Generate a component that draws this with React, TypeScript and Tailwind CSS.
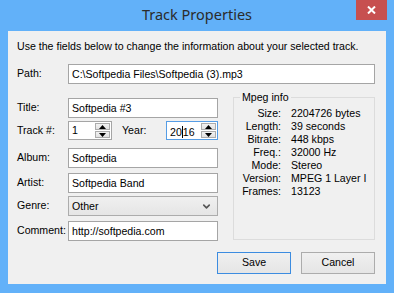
import { ChevronDown } from 'lucide-react';

const body = "font-['Liberation_Sans',Arial,sans-serif] text-[10.6px] text-black";

function Field({ value, className = '' }: { value: string; className?: string }) {
  return (
    <div className={`flex h-[20px] items-center border border-[#a5a5a5] bg-white px-[3px] ${className}`}>
      <span className="leading-none">{value}</span>
    </div>
  );
}

function SpinButtons() {
  return (
    <div className="flex h-full w-[15px] flex-col gap-[1px] py-[1px]">
      <div className="flex flex-1 items-center justify-center border border-[#acacac] bg-gradient-to-b from-[#f2f2f2] to-[#e2e2e2]">
        <svg width="7" height="4" viewBox="0 0 7 4"><path d="M0 4 L3.5 0 L7 4 Z" fill="#000" /></svg>
      </div>
      <div className="flex flex-1 items-center justify-center border border-[#acacac] bg-gradient-to-b from-[#f2f2f2] to-[#e2e2e2]">
        <svg width="7" height="4" viewBox="0 0 7 4"><path d="M0 0 L3.5 4 L7 0 Z" fill="#000" /></svg>
      </div>
    </div>
  );
}

function SpinBox({ value, focused, className = '' }: { value: string; focused?: boolean; className?: string }) {
  return (
    <div
      className={`flex h-[19px] items-center border bg-white pl-[3px] pr-[1px] ${
        focused ? 'border-[#569de5]' : 'border-[#a5a5a5]'
      } ${className}`}
    >
      <span className="flex-1 leading-none">
        {focused ? (
          <>
            20<span className="inline-block h-[12px] w-[1px] translate-y-[2px] bg-black" />16
          </>
        ) : (
          value
        )}
      </span>
      <SpinButtons />
    </div>
  );
}

const mpegInfo: [string, string][] = [
  ['Size:', '2204726 bytes'],
  ['Length:', '39 seconds'],
  ['Bitrate:', '448 kbps'],
  ['Freq.:', '32000 Hz'],
  ['Mode:', 'Stereo'],
  ['Version:', 'MPEG 1 Layer I'],
  ['Frames:', '13123'],
];

export default function App() {
  return (
    <div className="flex h-[293px] w-[394px] flex-col bg-[#62b1f9]">
      {/* title bar */}
      <div className="relative flex h-[31px] items-center justify-center">
        <span className="pb-[1px] font-['Noto_Sans',sans-serif] text-[14.5px] text-[#2b2b2b]">Track Properties</span>
        <button className="absolute right-[7px] top-0 flex h-[20px] w-[31px] items-center justify-center bg-[#c75050]">
          <svg width="9" height="8" viewBox="0 0 9 8">
            <path d="M1 0.5 L8 7.5 M8 0.5 L1 7.5" stroke="#fff" strokeWidth="2" />
          </svg>
        </button>
      </div>

      {/* client area */}
      <div className={`mx-[8px] mb-[9px] flex flex-1 flex-col bg-[#f0f0f0] pl-[9px] pr-[11px] pt-[8px] ${body}`}>
        <p className="h-[14px] leading-[14px]">Use the fields below to change the information about your selected track.</p>

        <div className="mt-[11px] flex items-center">
          <span className="w-[51px]">Path:</span>
          <Field value="C:\Softpedia Files\Softpedia (3).mp3" className="flex-1" />
        </div>

        <div className="mt-[13px] flex gap-[15px]">
          {/* left column */}
          <div className="flex w-[201px] flex-col">
            <div className="mt-[1px] flex items-center">
              <span className="w-[51px]">Title:</span>
              <Field value="Softpedia #3" className="flex-1" />
            </div>
            <div className="mt-[3px] flex items-center">
              <span className="w-[51px]">Track #:</span>
              <SpinBox value="1" className="w-[44px]" />
              <span className="ml-[10px] w-[44px]">Year:</span>
              <SpinBox value="2016" focused className="w-[52px]" />
            </div>
            <div className="mt-[8px] flex items-center">
              <span className="w-[51px]">Album:</span>
              <Field value="Softpedia" className="flex-1" />
            </div>
            <div className="mt-[5px] flex items-center">
              <span className="w-[51px]">Artist:</span>
              <Field value="Softpedia Band" className="flex-1" />
            </div>
            <div className="mt-[3px] flex items-center">
              <span className="w-[51px]">Genre:</span>
              <div className="flex h-[20px] flex-1 items-center justify-between border border-[#acacac] bg-gradient-to-b from-[#f0f0f0] to-[#e5e5e5] pl-[3px] pr-[5px]">
                <span className="leading-none">Other</span>
                <ChevronDown size={11} strokeWidth={3.5} color="#555" />
              </div>
            </div>
            <div className="mt-[5px] flex items-center">
              <span className="w-[51px]">Comment:</span>
              <Field value="http://softpedia.com" className="flex-1" />
            </div>
          </div>

          {/* mpeg info group */}
          <div className="relative h-[143px] flex-1 border border-[#dcdcdc]">
            <span className="absolute -top-[7px] left-[6px] bg-[#f0f0f0] px-[2px] leading-[13px]">Mpeg info</span>
            <div className="mt-[9px] grid grid-cols-[47px_1fr] gap-x-[10px]">
              {mpegInfo.map(([label, value]) => (
                <div key={label} className="contents">
                  <span className="text-right leading-[13px]">{label}</span>
                  <span className="leading-[13px]">{value}</span>
                </div>
              ))}
            </div>
          </div>
        </div>

        <div className="mt-[11px] flex justify-end gap-[10px]">
          <button className="h-[22px] w-[74px] border border-[#3c8ce0] bg-gradient-to-b from-[#f0f0f0] to-[#e5e5e5]">Save</button>
          <button className="h-[22px] w-[74px] border border-[#acacac] bg-gradient-to-b from-[#f0f0f0] to-[#e5e5e5]">Cancel</button>
        </div>
      </div>
    </div>
  );
}
